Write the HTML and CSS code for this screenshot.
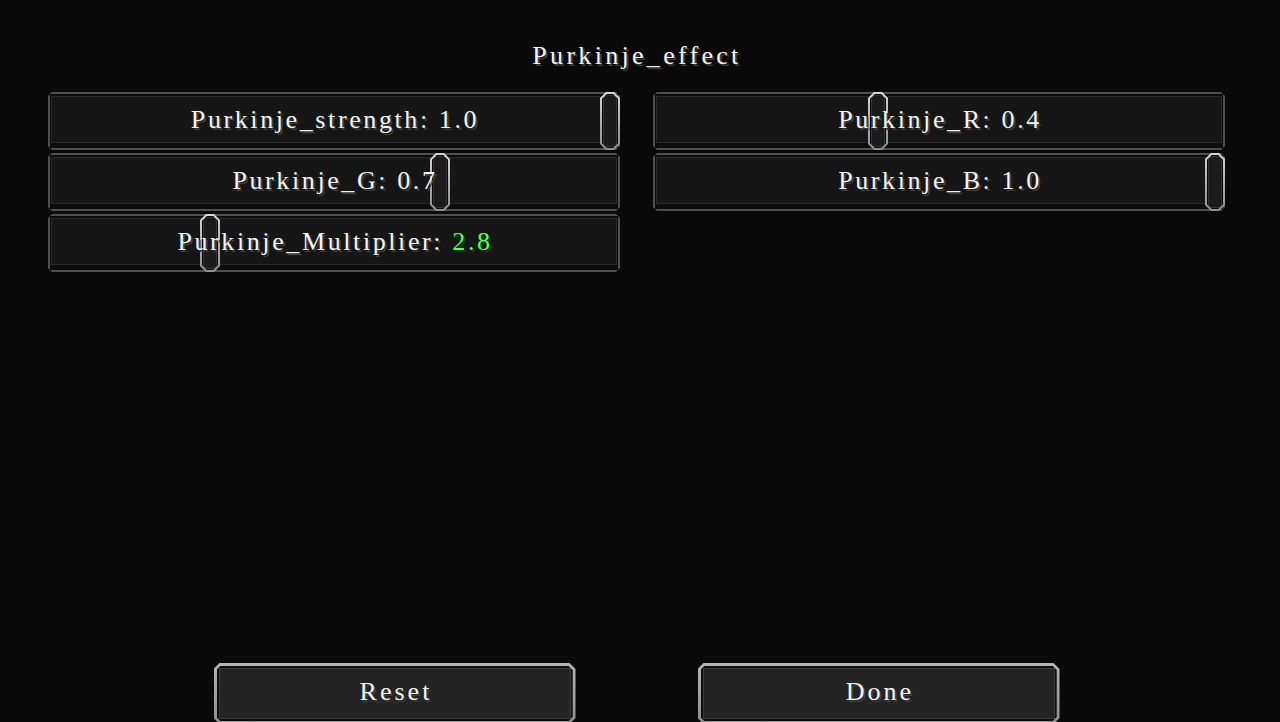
FILE: index.html
```html
<!DOCTYPE html>
<html>
<head>
<meta charset="utf-8">
<link rel="stylesheet" href="styles.css">
</head>
<body>
<div class="screen">
  <h1 class="title">Purkinje_effect</h1>
  <div class="grid">
    <div class="slider">
      <div class="frame"><div class="fill"></div></div>
      <span class="label">Purkinje_strength: 1.0</span>
      <div class="knob" style="left:552px"><div class="knob-in"></div></div>
    </div>
    <div class="slider">
      <div class="frame"><div class="fill"></div></div>
      <span class="label">Purkinje_R: 0.4</span>
      <div class="knob" style="left:215px"><div class="knob-in"></div></div>
    </div>
    <div class="slider">
      <div class="frame"><div class="fill"></div></div>
      <span class="label">Purkinje_G: 0.7</span>
      <div class="knob" style="left:382px"><div class="knob-in"></div></div>
    </div>
    <div class="slider">
      <div class="frame"><div class="fill"></div></div>
      <span class="label">Purkinje_B: 1.0</span>
      <div class="knob" style="left:552px"><div class="knob-in"></div></div>
    </div>
    <div class="slider">
      <div class="frame"><div class="fill"></div></div>
      <span class="label">Purkinje_Multiplier: <span class="green">2.8</span></span>
      <div class="knob" style="left:152px"><div class="knob-in"></div></div>
    </div>
  </div>
  <div class="buttons">
    <div class="btn"><div class="btn-in"><span class="btn-label">Reset</span></div></div>
    <div class="btn"><div class="btn-in"><span class="btn-label">Done</span></div></div>
  </div>
</div>
</body>
</html>
```
FILE: styles.css
```css
html, body {
  margin: 0;
  padding: 0;
  background: #0a0a0a;
  width: 1280px;
  height: 722px;
  overflow: hidden;
}
.screen {
  display: flex;
  flex-direction: column;
  height: 722px;
  font-family: "Liberation Serif", "Times New Roman", serif;
  font-variant-ligatures: none;
  color: #f4f4f4;
}
.title {
  margin: 40px 0 0 0;
  padding-right: 6px;
  height: 52px;
  font-weight: normal;
  font-size: 26px;
  line-height: 32px;
  letter-spacing: 3.3px;
  text-align: center;
  text-shadow: 2px 2px 0 #3c3c3c;
}
.grid {
  display: grid;
  grid-template-columns: 572px 572px;
  column-gap: 33px;
  row-gap: 3px;
  padding-left: 48px;
}
.slider {
  position: relative;
  height: 58px;
  display: flex;
  align-items: center;
  justify-content: center;
}
.frame {
  position: absolute;
  inset: 0;
  background: #505050;
  clip-path: polygon(4px 0, calc(100% - 4px) 0, 100% 4px, 100% calc(100% - 4px), calc(100% - 4px) 100%, 4px 100%, 0 calc(100% - 4px), 0 4px);
  padding: 2px;
  box-sizing: border-box;
}
.fill {
  width: 100%;
  height: 100%;
  background: #161616;
  box-sizing: border-box;
  border: 1px solid #0c0c0c;
  border-top: 2px solid #0c0c0c;
  border-bottom: 5px solid #0c0c0c;
  box-shadow: inset 0 0 0 1px #2a2a2a;
}
.label {
  position: relative;
  top: -1px;
  padding-left: 2px;
  font-size: 26px;
  letter-spacing: 2.6px;
  text-shadow: 2px 2px 0 #3c3c3c;
  white-space: pre;
  z-index: 2;
}
.green {
  color: #55ff55;
  text-shadow: 2px 2px 0 #153f15;
}
.knob {
  position: absolute;
  top: 0;
  width: 20px;
  height: 58px;
  background: linear-gradient(180deg, #d8d8d8 0%, #a8a8a8 60%, #909090 100%);
  clip-path: polygon(6px 0, 14px 0, 20px 6px, 20px 52px, 14px 58px, 6px 58px, 0 52px, 0 6px);
  padding: 2px;
  box-sizing: border-box;
  z-index: 1;
}
.knob-in {
  width: 100%;
  height: 100%;
  background: #1b1b1b;
  box-sizing: border-box;
  border: 1px solid #080808;
  box-shadow: inset 0 0 0 1px #333;
  clip-path: polygon(5px 0, 11px 0, 16px 5px, 16px 49px, 11px 54px, 5px 54px, 0 49px, 0 5px);
}
.buttons {
  margin-top: auto;
  display: flex;
  justify-content: center;
  gap: 122px;
  padding-right: 7px;
  margin-bottom: -2px;
}
.btn {
  width: 362px;
  height: 61px;
  background: linear-gradient(180deg, #b5b5b5, #8e8e8e);
  clip-path: polygon(6px 0, calc(100% - 6px) 0, 100% 6px, 100% calc(100% - 6px), calc(100% - 6px) 100%, 6px 100%, 0 calc(100% - 6px), 0 6px);
  padding: 3px;
  box-sizing: border-box;
}
.btn-in {
  width: 100%;
  height: 100%;
  background: #242424;
  box-sizing: border-box;
  border: 2px solid #0e0e0e;
  box-shadow: inset 0 0 0 1px #3a3a3a;
  display: flex;
  align-items: flex-start;
  justify-content: center;
  clip-path: polygon(4px 0, calc(100% - 4px) 0, 100% 4px, 100% calc(100% - 4px), calc(100% - 4px) 100%, 4px 100%, 0 calc(100% - 4px), 0 4px);
}
.btn-label {
  margin-top: 9px;
  padding-left: 3px;
  font-size: 26px;
  letter-spacing: 3px;
  text-shadow: 2px 2px 0 #3c3c3c;
}
```
